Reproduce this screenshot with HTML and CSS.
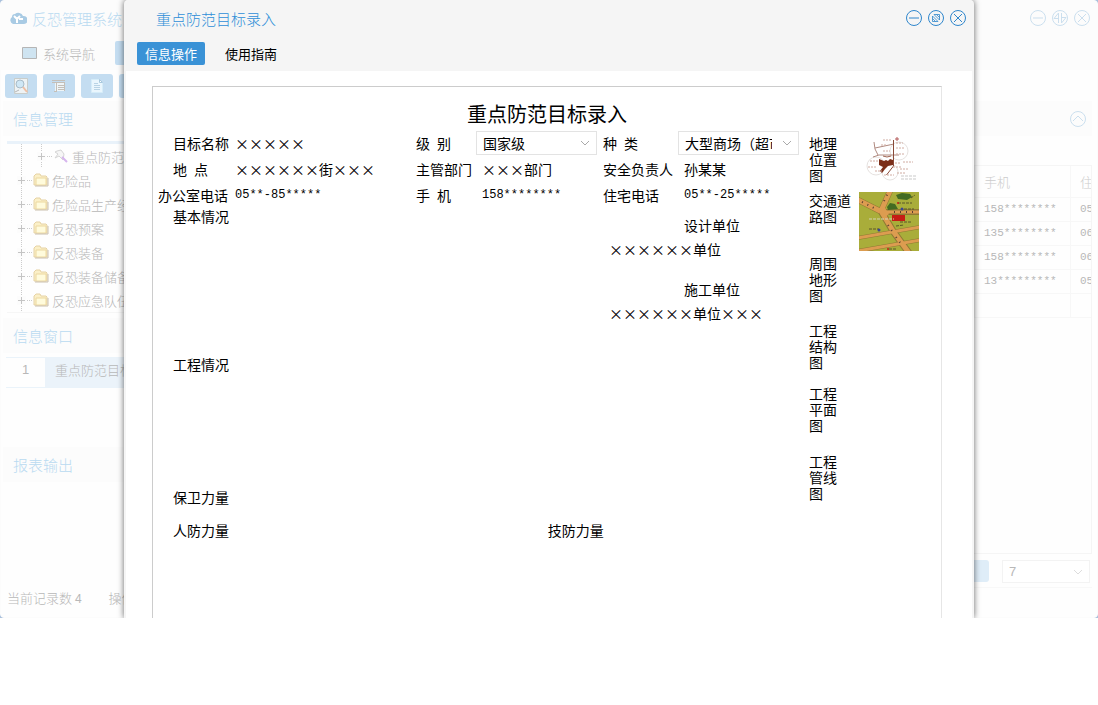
FILE: index.html
```html
<!DOCTYPE html>
<html lang="zh-CN">
<head>
    <meta charset="UTF-8">
    <meta name="viewport" content="width=device-width, initial-scale=1.0">
    <title>反恐管理系统</title>
    <link rel="stylesheet" href="styles.css">
</head>
<body>
<svg width="0" height="0" class="symbols" aria-hidden="true">
    <symbol id="branch" viewBox="0 0 28 24">
        <path d="M16.5 0V24M22 12.500H28" stroke="#ccc" stroke-dasharray="1 1" fill="none"/>
        <path d="M12 8h9v9h-9z" fill="#fcfcfc"/>
        <path d="M13 12.500h7M16.500 9v7" stroke="#c4c4c4" fill="none"/>
    </symbol>
    <symbol id="folder" viewBox="0 0 16 14">
        <path d="M1 12V3l2-2h4l1 2h5l1 1v8z" fill="#fbf0c8" stroke="#e6d2a4"/>
        <path d="M3 12V5h10v7z" fill="#fffbdc" stroke="#ecd8a0"/>
        <path d="M2 13h13V5" stroke="#c9bfae" fill="none"/>
    </symbol>
</svg>
<div class="desktop">
    <div class="app">
        <header class="app-head">
            <div class="title-row">
                <svg class="logo" viewBox="0 0 18 14"><path d="M4 13a4 4 0 0 1-1-7 3 3 0 0 1 3-3 5 5 0 0 1 8 2 4 4 0 0 1 1 8z" fill="#a9cbe4"/><path d="M5 5l3 3v4M11 5l-3 3M10 8h4" stroke="#fff" stroke-width="2" fill="none"/></svg>
                <h1>反恐管理系统</h1>
                <div class="win-btns">
                    <button type="button" aria-label="最小化"><svg viewBox="0 0 18 18"><circle cx="9" cy="9" r="7.500"/><path d="M4 9h10"/></svg></button>
                    <button type="button" aria-label="最大化"><svg viewBox="0 0 18 18"><circle cx="9" cy="9" r="7.500"/><path d="M7.500 14V4L3 9.500h4.500M10.500 4v10l4.500-5.500h-4.500"/></svg></button>
                    <button type="button" aria-label="关闭"><svg viewBox="0 0 18 18"><circle cx="9" cy="9" r="7.500"/><path d="M5 5l8 8M13 5l-8 8"/></svg></button>
                </div>
            </div>
            <nav class="app-tabs">
                <button type="button" class="tab"><svg width="15" height="12" viewBox="0 0 15 12"><path d="M.5.5h14v11H.5z" fill="#cfe4f1" stroke="#b5b5b5"/></svg>系统导航</button>
                <button type="button" class="tab on">信息管理</button>
            </nav>
        </header>

        <!-- 工具栏 -->
        <div class="toolbar">
            <button type="button" aria-label="查询"><svg width="16" height="16" viewBox="0 0 16 16"><path d="M1.500.5h13v15h-13z" fill="#eef3f5" stroke="#c9cdca"/><circle cx="7" cy="6" r="4" fill="#cfe7f5" stroke="#a9bcc8"/><path d="M10 9l4 5" stroke="#eebfa5" stroke-width="2"/><path d="M2 14l4-2" stroke="#b7b7b7"/></svg></button>
            <button type="button" aria-label="列表"><svg width="16" height="16" viewBox="0 0 16 16"><path d="M4 4h9v9H4z" fill="#eef5f8"/><path d="M1 2.500h13M1 4.500h13M7 7.500h6M7 9.500h6M7 11.500h6M5.500 5v9M3 13.500h3M13.500 5v8" stroke="#c4bfb8" fill="none"/></svg></button>
            <button type="button" aria-label="新建"><svg width="16" height="16" viewBox="0 0 16 16"><path d="M2.500 1.500h8l3 3v10h-11z" fill="#eaf6fd" stroke="#d6edf9"/><path d="M10.500 1.500v3h3z" fill="#fff" stroke="#a9c9de"/><path d="M5 5.500h4M5 7.500h6M5 9.500h6M5 11.500h6" stroke="#b9d3e5" fill="none"/></svg></button>
            <button type="button" aria-label="打印"></button>
        </div>

        <div class="app-body">
            <aside class="side">
                <h2>信息管理</h2>
                <ul class="tree">
                    <li class="child"><svg width="28" height="24" class="line"><path d="M16.500 0V24" stroke="#ccc" stroke-dasharray="1 1"/></svg><svg width="28" height="24"><use href="#branch"/></svg><svg width="16" height="14" viewBox="0 0 16 14"><path d="M2 3l3 2-3 4 4-2 4 4 1-6-3-4-4 1z" fill="#f6f6f6" stroke="#d5d5d5"/><path d="M9 8l5 5" stroke="#d6b5ee" stroke-width="2"/></svg>重点防范目标</li>
                    <li><svg width="28" height="24"><use href="#branch"/></svg><svg width="16" height="14"><use href="#folder"/></svg>危险品</li>
                    <li><svg width="28" height="24"><use href="#branch"/></svg><svg width="16" height="14"><use href="#folder"/></svg>危险品生产经营</li>
                    <li><svg width="28" height="24"><use href="#branch"/></svg><svg width="16" height="14"><use href="#folder"/></svg>反恐预案</li>
                    <li><svg width="28" height="24"><use href="#branch"/></svg><svg width="16" height="14"><use href="#folder"/></svg>反恐装备</li>
                    <li><svg width="28" height="24"><use href="#branch"/></svg><svg width="16" height="14"><use href="#folder"/></svg>反恐装备储备</li>
                    <li><svg width="28" height="24"><use href="#branch"/></svg><svg width="16" height="14"><use href="#folder"/></svg>反恐应急队伍</li>
                </ul>
                <h2>信息窗口</h2>
                <div class="windows">
                    <div class="window-row"><span class="no">1</span><span class="name">重点防范目标</span></div>
                </div>
                <h2>报表输出</h2>
            </aside>

            <main class="main">
                <div class="panel-head">
                    <button type="button" aria-label="收起"><svg viewBox="0 0 18 18"><circle cx="9" cy="9" r="7.500"/><path d="M4 11l5-5 5 5"/></svg></button>
                </div>
                <div class="table-box">
                    <table>
                        <thead>
                            <tr><th></th><th class="phone">手机</th><th class="home">住宅电话</th></tr>
                        </thead>
                        <tbody>
                            <tr><td></td><td>158********</td><td>05**-25*****</td></tr>
                            <tr><td></td><td>135********</td><td>06**-25*****</td></tr>
                            <tr><td></td><td>158********</td><td>06**-25*****</td></tr>
                            <tr><td></td><td>13*********</td><td>05**-25*****</td></tr>
                            <tr><td></td><td></td><td></td></tr>
                        </tbody>
                    </table>
                </div>
                <div class="pager">
                    <button type="button" class="page-btn" aria-label="下一页"></button>
                    <select aria-label="每页记录数"><option>7</option></select>
                </div>
            </main>
        </div>
        <footer class="status"><span>当前记录数 <b>4</b></span><span>操作员</span></footer>
    </div>

    <!-- 录入窗口 -->
    <section class="dialog" aria-labelledby="dialog-title">
        <header class="dialog-head">
            <div class="title-row">
                <h2 id="dialog-title">重点防范目标录入</h2>
                <div class="win-btns">
                    <button type="button" aria-label="最小化"><svg viewBox="0 0 18 18"><circle cx="9" cy="9" r="7.500"/><path d="M4 9h10"/></svg></button>
                    <button type="button" aria-label="还原"><svg viewBox="0 0 18 18"><circle cx="9" cy="9" r="7.500"/><path d="M5.500 7v5.500H11M7 5.500h5.500V11M5.500 7L11 12.500M7 5.500l5.500 5.500M5.500 9.500l3 3M9.500 5.500l3 3" stroke-width=".8"/></svg></button>
                    <button type="button" aria-label="关闭"><svg viewBox="0 0 18 18"><circle cx="9" cy="9" r="7.500"/><path d="M5 5l8 8M13 5l-8 8"/></svg></button>
                </div>
            </div>
            <nav class="dialog-tabs">
                <button type="button" class="on">信息操作</button>
                <button type="button">使用指南</button>
            </nav>
        </header>

        <form class="sheet">
            <h3>重点防范目标录入</h3>
            <div class="sheet-body">
                <div class="fields">
                    <label class="first" for="mc">目标名称</label>
                    <input id="mc" type="text" value="×××××">
                    <label for="jb">级&ensp;别</label>
                    <select id="jb"><option>国家级</option></select>
                    <label class="third" for="zl">种&ensp;类</label>
                    <select id="zl"><option>大型商场（超市）</option></select>

                    <label class="first" for="dd">地&ensp;点</label>
                    <input id="dd" type="text" value="××××××街×××">
                    <label for="bm">主管部门</label>
                    <input id="bm" type="text" value="×××部门">
                    <label class="third" for="fzr">安全负责人</label>
                    <input id="fzr" type="text" value="孙某某">

                    <label for="bgdh">办公室电话</label>
                    <input id="bgdh" class="num" type="text" value="05**-85*****">
                    <label for="sj">手&ensp;机</label>
                    <input id="sj" class="num" type="text" value="158********">
                    <label class="third" for="zzdh">住宅电话</label>
                    <input id="zzdh" class="num" type="text" value="05**-25*****">

                    <label class="first" for="jbqk">基本情况</label>
                    <textarea id="jbqk" class="mid"></textarea>
                    <div class="units">
                        <div><label for="sjdw">设计单位</label><input id="sjdw" type="text" value="××××××单位"></div>
                        <div><label for="sgdw">施工单位</label><input id="sgdw" type="text" value="××××××单位×××"></div>
                    </div>

                    <label class="first" for="gcqk">工程情况</label>
                    <textarea id="gcqk" class="full"></textarea>

                    <label class="first" for="bwll">保卫力量</label>
                    <textarea id="bwll" class="full"></textarea>

                    <label class="first" for="rfll">人防力量</label>
                    <div class="full forces">
                        <textarea id="rfll"></textarea>
                        <label for="jfll">技防力量</label>
                        <textarea id="jfll"></textarea>
                    </div>
                </div>

                <div class="maps">
                    <span>地理<br>位置<br>图</span>
                    <svg width="60" height="51" viewBox="0 0 60 51" role="img" aria-label="地理位置图">
                        <g fill="none" stroke="#e6e2e0">
                            <circle cx="40" cy="16" r="9"/><circle cx="17" cy="31" r="9"/><circle cx="31" cy="37" r="8"/>
                        </g>
                        <path d="M14 22l6-2h20M16 13l19-4M15 7l1 7 3 6M22 30l10-3" stroke="#b08a80" fill="none"/>
                        <path d="M34.500 5v26l-7 9" stroke="#8a4a38" fill="none"/>
                        <path d="M20 24l5 2 2-1 2 1 2-2 3 1v5l-5 1-3 3-3 4-2-2 3-4-4-2z" fill="#7c2f19"/>
                        <path d="M24 21l4 1 4-1" stroke="#a0644f" fill="none"/>
                        <g stroke="#d0aca2" stroke-dasharray="2 1"><path d="M24 5h8M37 8h7M22 10h6M37 13h8M24 16h7M37 19h8M11 26h8M9 32h8M36 28h6M44 27h10M34 32h9M16 36h7M41 34h8M25 40h10M38 38h8"/></g>
                        <path d="M36 4h4M38 2v4" stroke="#b45a5a"/>
                        <path d="M42 41h16M42 44h16" stroke="#e4e4e4" stroke-width="2" stroke-dasharray="3 1"/>
                    </svg>
                    <span>交通道<br>路图</span>
                    <svg width="60" height="59" viewBox="0 0 60 59" role="img" aria-label="交通道路图">
                        <path d="M0 0h60v59H0z" fill="#a9ad3a"/>
                        <g stroke="#8f7a33" fill="none">
                            <path d="M-1 8l22 11M22 19L31-1M22 20h39" stroke-width="6"/>
                            <path d="M22 19l12 20 16 22" stroke-width="7"/>
                            <path d="M-1 46l62-11M-1 59l62-11" stroke-width="4"/>
                            <g stroke="#dc9c50">
                                <path d="M-1 8l22 11M22 19L31-1M34 39l16 22M22 19l12 20" stroke-width="5"/>
                                <path d="M22 20h39" stroke-width="3"/>
                                <path d="M-1 46l62-11M-1 59l62-11" stroke-width="3"/>
                            </g>
                        </g>
                        <path d="M17 16h9l4 6-5 4z" fill="#dc9c50"/>
                        <path d="M37 3l6-2 8 1 2 3-5 3-9-1z" fill="#436b22"/>
                        <path d="M28 15l3-4 5 1 3 5-10 1z" fill="#436b22"/>
                        <path d="M33 23h13v6H33z" fill="#c51d15"/>
                        <path d="M3 10l12 6M25 9l4-8M35 20h20M29 33l4 6M37 45l5 7" stroke="#5b3f30" stroke-dasharray="1 5" stroke-width="2"/>
                        <path d="M10 27h25" stroke="#d4d2b4" stroke-dasharray="3 1" stroke-width="1"/>
                        <path d="M39 11h14M45 17h10M41 30h11M10 37h10M37 34l8-1M30 57h8M52 6l4-3" stroke="#5b5728" stroke-dasharray="3 1"/>
                        <circle cx="20" cy="38" r="1.500" fill="#3b4690"/><circle cx="43" cy="17" r="1.500" fill="#3b4690"/><circle cx="29" cy="57" r="1" fill="#c51d15"/><circle cx="39" cy="11" r="1" fill="#c51d15"/>
                    </svg>
                    <span>周围<br>地形<br>图</span>
                    <span>工程<br>结构<br>图</span>
                    <span>工程<br>平面<br>图</span>
                    <span>工程<br>管线<br>图</span>
                </div>
            </div>
        </form>
    </section>
</div>
</body>
</html>
```
FILE: styles.css
```css
* {
    margin: 0;
    padding: 0;
    box-sizing: border-box;
}
body {
    background: #fff;
    font-family: "Noto Sans CJK SC", sans-serif;
    font-size: 13px;
    color: #000;
}
button, input, select, textarea {
    font: inherit;
    color: inherit;
    border: none;
    background: none;
}
h1, h2, th {
    font-weight: 300;
}
.symbols {
    display: block;
}
.desktop {
    position: relative;
    background: #a9c0dc;
    overflow: hidden;
}
/*后面的主窗口*/
.app {
    background: #fefefe;
    border: 1px solid #fcfcfc;
    border-radius: 4px;
    color: #b8b8b8;
    font-weight: 300;
    overflow: hidden;
}
.app-head {
    background: #fcfcfc;
    height: 69px;
}
.title-row {
    display: flex;
    align-items: center;
    height: 36px;
}
.title-row h1, .title-row h2 {
    font-size: 15px;
}
.app .title-row {
    height: 34px;
    padding: 0 6px 0 8px;
}
.app .title-row h1 {
    color: #b9daf1;
}
.logo {
    width: 18px;
    height: 14px;
    margin-right: 5px;
}
.win-btns {
    display: flex;
    gap: 4px;
    margin-left: auto;
}
.win-btns button, .panel-head button {
    width: 18px;
    height: 18px;
}
.win-btns svg, .panel-head svg {
    display: block;
    fill: none;
    stroke: #2f86cc;
}
.app svg[viewBox="0 0 18 18"] {
    stroke: #cbdfee;
}
.app-tabs {
    display: flex;
    align-items: center;
    padding-left: 21px;
}
.tab {
    display: flex;
    align-items: center;
    gap: 6px;
    height: 36px;
}
.tab.on {
    height: 24px;
    margin-left: 20px;
    padding: 0 8px;
    border-radius: 2px;
    background: #c4ddf1;
    color: #c4ddf1;
}
.toolbar {
    display: flex;
    align-items: center;
    gap: 6px;
    height: 31px;
    padding-left: 4px;
}
.toolbar button {
    display: flex;
    align-items: center;
    justify-content: center;
    width: 32px;
    height: 24px;
    border-radius: 3px;
    background: #c4ddf1;
}
.app-body {
    display: flex;
    min-height: 487px;
    padding: 0 5px 0 2px;
}
/*左侧栏*/
.side {
    width: 200px;
}
.side h2 {
    height: 35px;
    line-height: 35px;
    padding-left: 10px;
    background: #fcfcfc;
    font-size: 15px;
    color: #b9daf1;
}
.tree {
    list-style: none;
    margin: 5px 0 5px 4px;
    border-top: 3px solid #e9f2fa;
    border-bottom: 1px solid #f6f6f6;
}
.tree li {
    display: flex;
    align-items: center;
    height: 24px;
    margin-left: -2px;
    white-space: nowrap;
}
.tree li svg:first-child + svg {
    margin-right: 3px;
}
.tree .line {
    margin-right: -8px;
}
.tree .child svg:first-child + svg {
    margin-right: 0;
}
.tree .child svg:last-child {
    margin-right: 3px;
}
.windows {
    min-height: 94px;
    padding: 4px 0 0 3px;
}
.window-row {
    display: flex;
    height: 31px;
    line-height: 24px;
    border: solid #eaf3fa;
    border-width: 1px 0;
}
.window-row .no {
    width: 39px;
    text-align: center;
    font-family: "Liberation Sans", sans-serif;
}
.window-row .name {
    flex: 1;
    padding-left: 10px;
    background: #ebf3fa;
}
/*右侧列表*/
.main {
    flex: 1;
    min-width: 0;
    display: flex;
    flex-direction: column;
}
.panel-head {
    display: flex;
    align-items: center;
    justify-content: flex-end;
    height: 35px;
    padding-right: 5px;
    background: #fcfcfc;
}
.table-box {
    flex: 1;
    margin-top: 29px;
    overflow: hidden;
    border: solid #f5f5f5;
    border-width: 1px 1px 1px 0;
}
table {
    width: calc(100% + 60px);
    table-layout: fixed;
    border-collapse: collapse;
}
th, td {
    height: 24px;
    padding-left: 9px;
    border: solid #f7f7f7;
    border-width: 0 1px 1px 0;
    text-align: left;
    white-space: nowrap;
}
th {
    height: 31px;
    color: #ccc;
}
td {
    font-family: "Liberation Mono", monospace;
    font-size: 11px;
}
.phone {
    width: 96px;
}
.home {
    width: 80px;
}
.pager {
    display: flex;
    justify-content: flex-end;
    gap: 13px;
    height: 28px;
    margin-top: 6px;
    padding-right: 2px;
    border-bottom: 1px solid #f8f8f8;
}
.page-btn {
    width: 32px;
    height: 22px;
    border-radius: 3px;
    background: #dfedf8;
}
select {
    appearance: none;
    border: 1px solid #e3e3e3;
    background: #fff url("data:image/svg+xml,%3Csvg xmlns='http://www.w3.org/2000/svg' width='10' height='6'%3E%3Cpath d='M1 1l4 4 4-4' fill='none' stroke='%23aaa'/%3E%3C/svg%3E") no-repeat right 6px center;
}
.pager select {
    width: 88px;
    height: 23px;
    padding-left: 6px;
    border-color: #f3f3f3;
    background-image: url("data:image/svg+xml,%3Csvg xmlns='http://www.w3.org/2000/svg' width='10' height='6'%3E%3Cpath d='M1 1l4 4 4-4' fill='none' stroke='%23ddd'/%3E%3C/svg%3E");
    font-family: "Liberation Sans", sans-serif;
}
.status {
    display: flex;
    gap: 27px;
    height: 29px;
    line-height: 20px;
    padding-left: 6px;
}
.status b {
    font: 12px "Liberation Sans", sans-serif;
}
/*录入窗口，浮在主窗口上面*/
.dialog {
    position: absolute;
    top: 0;
    bottom: 0;
    left: 50%;
    width: 850px;
    max-width: 100%;
    transform: translateX(-50%);
    display: flex;
    flex-direction: column;
    background: #fff;
    border: solid #f5f5f5;
    border-width: 0 2px;
    border-radius: 4px 4px 0 0;
    box-shadow: 0 0 6px rgba(0, 0, 0, 0.6);
    overflow: hidden;
}
.dialog-head {
    height: 71px;
    background: #f5f5f5;
}
.dialog .title-row {
    padding: 0 5px 0 30px;
}
.dialog .title-row h2 {
    color: #2f8fd8;
}
.dialog-tabs {
    display: flex;
    gap: 12px;
    padding: 6px 0 0 11px;
}
.dialog-tabs button {
    height: 23px;
    padding: 0 8px;
    border-radius: 2px;
    line-height: 23px;
}
.dialog-tabs .on {
    background: #3a92d6;
    color: #fff;
}
.sheet {
    flex: 1;
    margin: 15px 30px 0 26px;
    border: solid #ccc;
    border-width: 1px 1px 0;
    border-right-color: #e6e6e6;
    font-size: 14px;
}
.sheet h3 {
    height: 44px;
    padding-top: 12px;
    line-height: 30px;
    font-size: 20px;
    font-weight: 400;
    text-align: center;
}
.sheet-body {
    display: flex;
    gap: 10px;
    padding-left: 5px;
}
.fields {
    flex: 1;
    display: grid;
    grid-template-columns: 71px 1fr 60px 121px 81px 121px;
    grid-template-rows: 26px 26px 21px 148px 133px 33px;
}
.fields label {
    line-height: 24px;
    white-space: nowrap;
}
.fields .first {
    padding-left: 15px;
}
.fields .third {
    padding-left: 6px;
}
.fields input, .fields select {
    width: 100%;
    min-width: 0;
    height: 24px;
    padding-left: 6px;
}
.fields select {
    padding-right: 26px;
}
.fields .num {
    font-family: "Liberation Mono", monospace;
    font-size: 12px;
}
.fields textarea {
    width: 100%;
    resize: none;
    outline: none;
}
.mid {
    grid-column: 2 / 5;
}
.full {
    grid-column: 2 / 7;
}
/*设计、施工单位*/
.units {
    grid-column: 5 / 7;
    display: grid;
    align-content: start;
    gap: 16px;
    padding-top: 9px;
}
.units label {
    display: block;
    padding-left: 87px;
}
.units input {
    padding-left: 12px;
}
.forces {
    display: grid;
    grid-template-columns: 5fr 76px 3fr;
}
.forces label {
    padding: 0 10px;
}
.maps {
    display: grid;
    grid-template-columns: 50px 60px;
    grid-template-rows: 57px 63px 67px 63px 68px 60px;
    padding: 4px 22px 0 0;
    line-height: 16px;
}
.maps span {
    grid-column: 1;
}
```
